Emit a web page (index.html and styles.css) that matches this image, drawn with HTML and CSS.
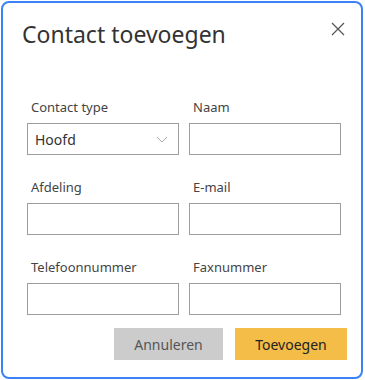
FILE: index.html
```html
<!DOCTYPE html>
<html lang="nl">
<head>
  <meta charset="UTF-8">
  <title>Contact toevoegen</title>
  <link rel="stylesheet" href="styles.css">
</head>
<body>

<div class="dialog">
  <div class="dialog-header">
    <h2 class="dialog-title">Contact toevoegen</h2>
    <button type="button" class="close-btn" aria-label="Sluiten">
      <svg width="14" height="14" viewBox="0 0 14 14">
        <path d="M1 1 L13 13 M13 1 L1 13" stroke="#555" stroke-width="1.2" fill="none"/>
      </svg>
    </button>
  </div>

  <form class="contact-form">
    <div class="form-grid">
      <div class="form-group">
        <label>Contact type</label>
        <div class="select-box">
          <span>Hoofd</span>
          <svg width="12" height="7" viewBox="0 0 12 7">
            <path d="M1 1 L6 6 L11 1" stroke="#aaa" stroke-width="1" fill="none"/>
          </svg>
        </div>
      </div>

      <div class="form-group">
        <label>Naam</label>
        <input type="text">
      </div>

      <div class="form-group">
        <label>Afdeling</label>
        <input type="text">
      </div>

      <div class="form-group">
        <label>E-mail</label>
        <input type="email">
      </div>

      <div class="form-group">
        <label>Telefoonnummer</label>
        <input type="text">
      </div>

      <div class="form-group">
        <label>Faxnummer</label>
        <input type="text">
      </div>
    </div>

    <div class="form-actions">
      <button type="button" class="btn btn-cancel">Annuleren</button>
      <button type="submit" class="btn btn-add">Toevoegen</button>
    </div>
  </form>
</div>

</body>
</html>
```

FILE: styles.css
```css
body {
  margin: 0;
  font-family: "Noto Sans", sans-serif;
  color: #333;
  background: #fff;
}

.dialog {
  box-sizing: border-box;
  width: 362px;
  height: 378px;
  margin: 1px 0 0 1px;
  border: 2px solid #3b82f6;
  border-radius: 8px;
  background: #fff;
}

.dialog-header {
  display: flex;
  justify-content: space-between;
  align-items: flex-start;
  padding: 16px 16px 0 19px;
}

.dialog-title {
  margin: 0;
  font-size: 23px;
  font-weight: 400;
  line-height: 30px;
  color: #333;
}

.close-btn {
  border: none;
  background: none;
  padding: 0;
  margin-top: 3px;
  cursor: pointer;
  line-height: 0;
}

.contact-form {
  padding: 49px 0 0 24px;
}

.form-grid {
  display: grid;
  grid-template-columns: 152px 152px;
  column-gap: 10px;
  row-gap: 23px;
}

.form-group label {
  display: block;
  font-size: 13px;
  line-height: 18px;
  margin: 0 0 7px 4px;
  color: #444;
}

input,
.select-box {
  box-sizing: border-box;
  display: block;
  width: 152px;
  height: 32px;
  border: 1px solid #9e9e9e;
  border-radius: 0;
  padding: 0 7px;
  font-family: inherit;
  font-size: 14px;
  color: #333;
}

.select-box {
  display: flex;
  align-items: center;
  justify-content: space-between;
  padding: 0 10px 0 7px;
}

.form-actions {
  display: flex;
  justify-content: flex-end;
  gap: 12px;
  margin: 13px 14px 0 0;
}

.btn {
  height: 32px;
  border: none;
  font-family: inherit;
  font-size: 14px;
  cursor: pointer;
}

.btn-cancel {
  width: 109px;
  background-color: #cccccc;
  color: #555;
}

.btn-add {
  width: 112px;
  background-color: #f4bd47;
  color: #222;
}
```
